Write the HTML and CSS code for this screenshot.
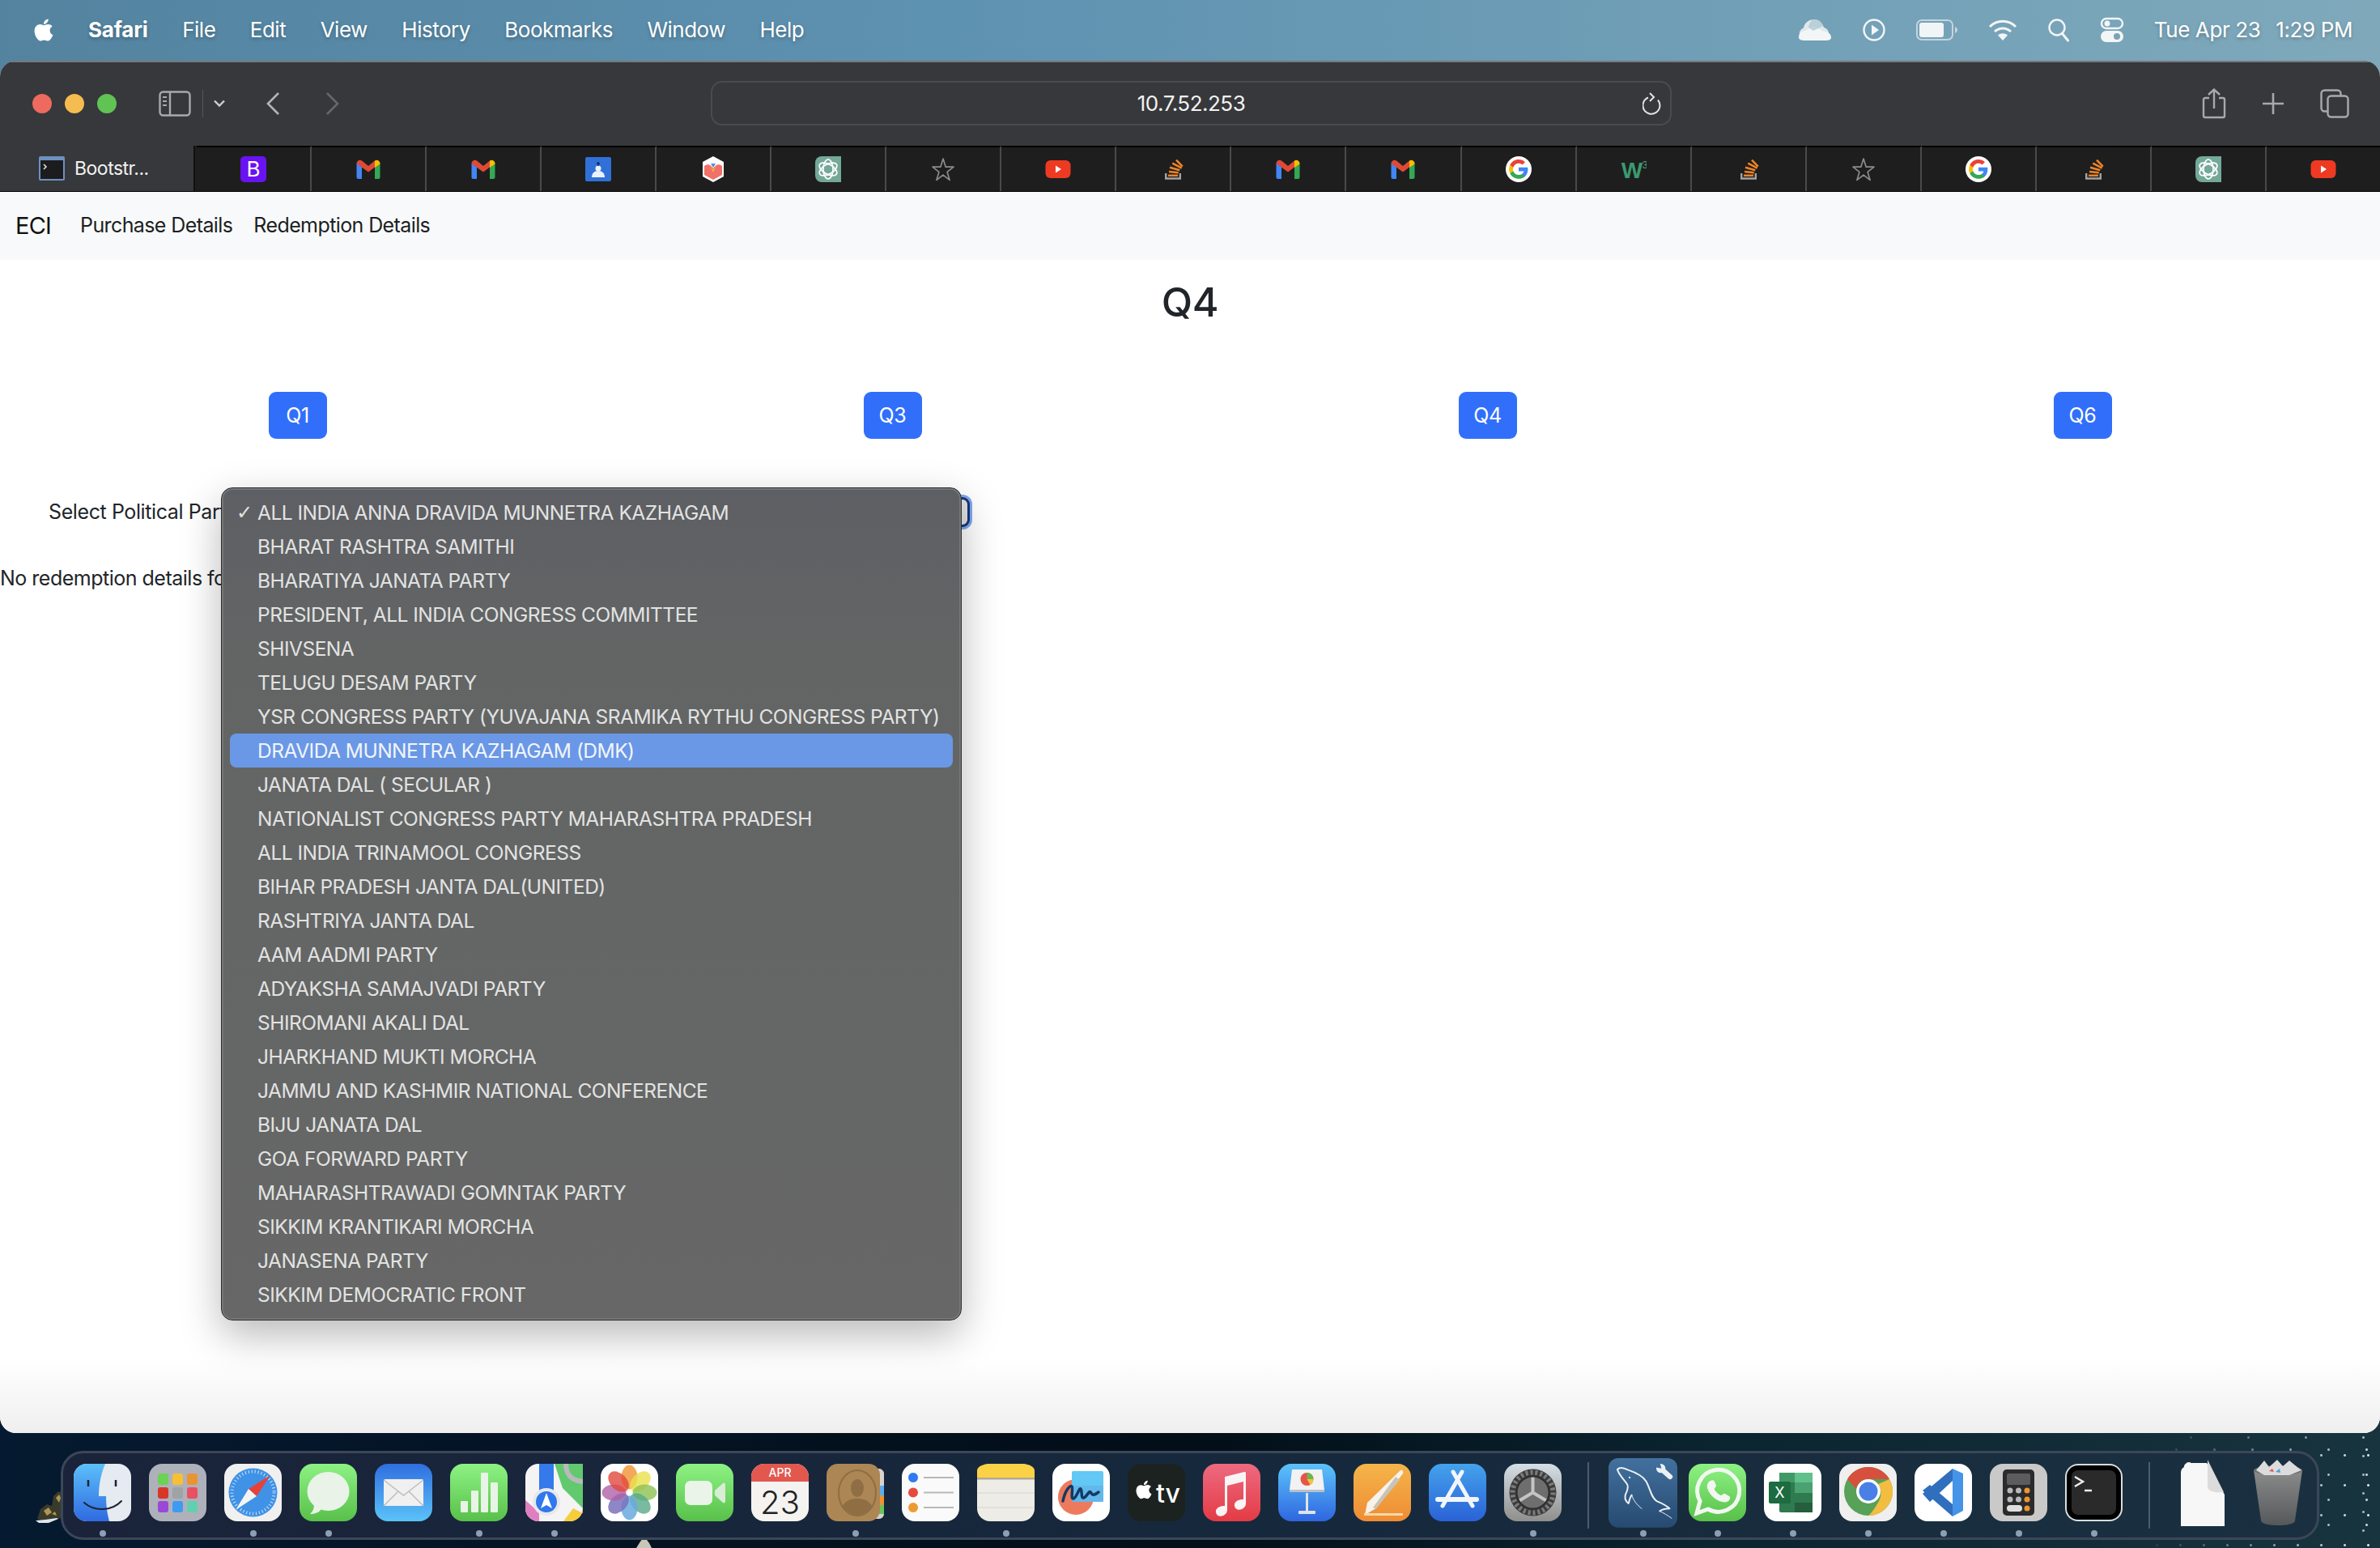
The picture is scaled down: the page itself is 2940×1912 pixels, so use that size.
FILE: index.html
```html
<!DOCTYPE html>
<html lang="en">
<head>
    <meta charset="UTF-8">
    <meta name="viewport" content="width=device-width, initial-scale=1.0">
    <title>Q4 - ECI</title>
    <link rel="stylesheet" href="styles.css">
</head>
<body>

<!-- Shared icons and gradients -->
<svg class="sprite" aria-hidden="true">
    <defs>
        <linearGradient id="gFinder" x1="0" y1="0" x2="0" y2="1"><stop offset="0" stop-color="#5cc0fa"/><stop offset="1" stop-color="#2f6ae0"/></linearGradient>
        <linearGradient id="gGreen" x1="0" y1="0" x2="0" y2="1"><stop offset="0" stop-color="#8df283"/><stop offset="1" stop-color="#58c04a"/></linearGradient>
        <linearGradient id="gMail" x1="0" y1="0" x2="0" y2="1"><stop offset="0" stop-color="#2f6fe0"/><stop offset="1" stop-color="#5cc2f8"/></linearGradient>
        <linearGradient id="gMusic" x1="0" y1="0" x2="0" y2="1"><stop offset="0" stop-color="#ee6a80"/><stop offset="1" stop-color="#e33b45"/></linearGradient>
        <linearGradient id="gKey" x1="0" y1="0" x2="0" y2="1"><stop offset="0" stop-color="#5cc3fa"/><stop offset="1" stop-color="#2e66e0"/></linearGradient>
        <linearGradient id="gPages" x1="0" y1="0" x2="0" y2="1"><stop offset="0" stop-color="#f5b54a"/><stop offset="1" stop-color="#ee8c34"/></linearGradient>
        <linearGradient id="gStore" x1="0" y1="0" x2="0" y2="1"><stop offset="0" stop-color="#44a2ec"/><stop offset="1" stop-color="#2a62d6"/></linearGradient>
        <linearGradient id="gGear" x1="0" y1="0" x2="0" y2="1"><stop offset="0" stop-color="#d5dfe6"/><stop offset="1" stop-color="#8f8f8c"/></linearGradient>
        <linearGradient id="gMysql" x1="0" y1="0" x2="0" y2="1"><stop offset="0" stop-color="#42719f"/><stop offset="1" stop-color="#274a70"/></linearGradient>
        <linearGradient id="gTrash" x1="0" y1="0" x2="0" y2="1"><stop offset="0" stop-color="#8b8b8b"/><stop offset="1" stop-color="#55585a"/></linearGradient>

        <symbol id="apple" viewBox="0 0 24 24"><path d="M17.05 20.28c-.98.95-2.05.8-3.08.35-1.09-.46-2.09-.48-3.24 0-1.44.62-2.2.44-3.06-.35C2.79 15.25 3.51 7.59 9.05 7.31c1.35.07 2.29.74 3.08.8 1.18-.24 2.31-.93 3.57-.84 1.51.12 2.65.72 3.4 1.8-3.12 1.87-2.38 5.98.48 7.13-.57 1.5-1.31 2.99-2.54 4.09zM12.03 7.25c-.15-2.23 1.66-4.07 3.74-4.25.29 2.58-2.34 4.5-3.74 4.25z"/></symbol>

        <symbol id="fav-gmail" viewBox="0 0 32 32">
            <path fill="#4285f4" d="M1.5 8.5V26a2 2 0 0 0 2 2h4.5V13z"/>
            <path fill="#34a853" d="M24 13v15h4.5a2 2 0 0 0 2-2V8.500z"/>
            <path fill="#e04a35" d="M1.500 9c0-3.500 4-5.500 6.500-3.500L16 12l8-6.500v8L16 19.500 1.500 9z"/>
            <path fill="#fbbc04" d="M24 5.500c2.500-2 6.500 0 6.500 3.500v.5L24 14z"/>
        </symbol>
        <symbol id="fav-google" viewBox="0 0 32 32">
            <circle cx="16" cy="16" r="16" fill="#fff"/>
            <g transform="translate(3 3) scale(1.08)">
                <path fill="#4285f4" d="M22.56 12.25c0-.78-.07-1.53-.2-2.25H12v4.26h5.92c-.26 1.37-1.04 2.53-2.21 3.31v2.77h3.57c2.08-1.92 3.28-4.74 3.28-8.09z"/>
                <path fill="#34a853" d="M12 23c2.97 0 5.46-.98 7.28-2.66l-3.57-2.77c-.98.66-2.23 1.06-3.71 1.06-2.86 0-5.29-1.93-6.16-4.53H2.18v2.84C3.99 20.53 7.7 23 12 23z"/>
                <path fill="#fbbc05" d="M5.84 14.09c-.22-.66-.35-1.36-.35-2.09s.13-1.43.35-2.09V7.07H2.18C1.43 8.55 1 10.22 1 12s.43 3.45 1.18 4.93l2.85-2.22.81-.62z"/>
                <path fill="#ea4335" d="M12 5.38c1.62 0 3.06.56 4.21 1.64l3.15-3.15C17.45 2.09 14.97 1 12 1 7.7 1 3.99 3.47 2.18 7.07l3.66 2.84c.87-2.6 3.3-4.53 6.16-4.53z"/>
            </g>
        </symbol>
        <symbol id="fav-yt" viewBox="0 0 32 32">
            <rect x="0.500" y="5" width="31" height="22" rx="6" fill="#ee3a22"/>
            <path fill="#fff" d="M13 11.500l7 4.500-7 4.500z"/>
        </symbol>
        <symbol id="fav-so" viewBox="0 0 32 32">
            <path fill="none" stroke="#a3a3a3" stroke-width="2.400" d="M7.200 21v6.500h17.600V21"/>
            <g fill="none" stroke="#ee8428" stroke-width="2.600">
                <path d="M10 23.700h12"/>
                <path d="M11 19l11.700 1.300"/>
                <path d="M12 13.700l12.300 3.600"/>
                <path d="M15.300 8.700l11.400 6"/>
                <path d="M20 4.700l7.700 8"/>
            </g>
        </symbol>
        <symbol id="fav-star" viewBox="0 0 32 32">
            <path fill="none" stroke="#8c8c8c" stroke-width="1.700" stroke-linejoin="round" d="M16 3l3.200 10.200h9.800l-7.900 6.200 3 10-8.100-6.300-8.100 6.300 3-10L3 13.200h9.800z"/>
        </symbol>
        <symbol id="fav-gpt" viewBox="0 0 32 32">
            <path fill="#74a899" d="M8 0h24v32H8a8 8 0 0 1-8-8V8a8 8 0 0 1 8-8z"/>
            <g fill="none" stroke="#fff" stroke-width="1.700">
                <ellipse cx="16" cy="16" rx="6" ry="12"/>
                <ellipse cx="16" cy="16" rx="6" ry="12" transform="rotate(60 16 16)"/>
                <ellipse cx="16" cy="16" rx="6" ry="12" transform="rotate(120 16 16)"/>
            </g>
        </symbol>
    </defs>
</svg>

<!-- macOS menu bar -->
<header class="menubar">
    <nav class="menu-left">
        <svg class="menu-apple"><use href="#apple"/></svg>
        <span class="menu-item menu-app">Safari</span>
        <span class="menu-item">File</span>
        <span class="menu-item">Edit</span>
        <span class="menu-item">View</span>
        <span class="menu-item">History</span>
        <span class="menu-item">Bookmarks</span>
        <span class="menu-item">Window</span>
        <span class="menu-item">Help</span>
    </nav>
    <div class="menu-right">
        <svg class="status-icon" width="42" height="28" viewBox="0 0 42 28"><path fill="#dfe8ec" d="M9 27a8 8 0 0 1-2-15.500C8 5 14 1 20 1c6 0 10 4 12 10a8.500 8.500 0 0 1 1 16z"/><path fill="#f3f6f7" d="M1 23c0-5 4-8 8-8l10-6 13 7c5 0 9 3 9 7 0 3-2 4-8 4H9c-5 0-8-1-8-4z"/><path fill="#a9c4d0" d="M20 1c5 0 9 3 11 8l-12 6-6-4c1-6 4-10 7-10z" opacity=".7"/></svg>
        <svg class="status-icon" width="30" height="30" viewBox="0 0 30 30"><circle cx="15" cy="15" r="12.500" fill="none" stroke="#f3f6f7" stroke-width="2.400"/><path fill="#f3f6f7" d="M12 8.500l9 6.500-9 6.500z"/></svg>
        <svg class="status-icon" width="52" height="26" viewBox="0 0 52 26"><rect x="1" y="1" width="44" height="24" rx="6" fill="none" stroke="#c3d5dd" stroke-width="2"/><rect x="4" y="4" width="30" height="18" rx="3" fill="#f1f5f6"/><path fill="#c3d5dd" d="M48 9c2 1 3 2.500 3 4s-1 3-3 4z"/></svg>
        <svg class="status-icon" width="36" height="28" viewBox="0 0 36 28"><g fill="none" stroke="#f3f6f7" stroke-width="3"><path d="M2 10c9-9 23-9 32 0"/><path d="M8 16c6-5.500 14-5.500 20 0"/></g><path fill="#f3f6f7" d="M18 27l-6-6.500c3.500-3 8.500-3 12 0z"/></svg>
        <svg class="status-icon" width="28" height="30" viewBox="0 0 28 30"><circle cx="12" cy="12" r="9.500" fill="none" stroke="#f3f6f7" stroke-width="2.400"/><path stroke="#f3f6f7" stroke-width="3" stroke-linecap="round" d="M18.500 19.500l7 8.500"/></svg>
        <svg class="status-icon" width="30" height="32" viewBox="0 0 30 32"><rect x="2" y="2" width="26" height="12" rx="6" fill="none" stroke="#f3f6f7" stroke-width="2.400"/><circle cx="9" cy="8" r="3.500" fill="#f3f6f7"/><rect x="1" y="17" width="28" height="14" rx="7" fill="#f3f6f7"/><circle cx="21" cy="24" r="4" fill="#7ba3b6"/></svg>
        <span class="clock"><span>Tue Apr 23</span><span>1:29 PM</span></span>
    </div>
</header>

<!-- Safari window -->
<main class="window">
    <div class="toolbar">
        <div class="traffic">
            <span class="light light-red"></span>
            <span class="light light-yellow"></span>
            <span class="light light-green"></span>
        </div>
        <svg class="tool tool-sidebar" width="40" height="32" viewBox="0 0 40 32"><rect x="1.500" y="1.500" width="37" height="29" rx="4" fill="none" stroke="#a8a9ab" stroke-width="2.400"/><path stroke="#a8a9ab" stroke-width="2.400" d="M14 2v28"/><path stroke="#a8a9ab" stroke-width="2" d="M5 8h5M5 13h5M5 18h5"/></svg>
        <span class="tool-divider"></span>
        <svg class="tool tool-down" width="16" height="10" viewBox="0 0 16 10"><path fill="none" stroke="#cfcfd0" stroke-width="2.400" d="M2 1.500l6 6 6-6"/></svg>
        <svg class="tool tool-back" width="18" height="30" viewBox="0 0 18 30"><path fill="none" stroke="#b3b4b6" stroke-width="2.600" d="M16 2L3 15l13 13"/></svg>
        <svg class="tool tool-forward" width="18" height="30" viewBox="0 0 18 30"><path fill="none" stroke="#66676a" stroke-width="2.600" d="M2 2l13 13L2 28"/></svg>
        <div class="address">
            <span class="address-text">10.7.52.253</span>
            <svg class="address-reload" width="24" height="28" viewBox="0 0 24 28"><path fill="none" stroke="#e4e4e5" stroke-width="2" d="M7 6.500a10.500 10.500 0 1 0 12 3"/><path fill="none" stroke="#e4e4e5" stroke-width="2" d="M9 1l5 5-5 5"/></svg>
        </div>
        <div class="tool-right">
            <svg width="30" height="38" viewBox="0 0 30 38"><path fill="none" stroke="#a8a9ab" stroke-width="2.400" d="M9 12H4a2 2 0 0 0-2 2v20a2 2 0 0 0 2 2h22a2 2 0 0 0 2-2V14a2 2 0 0 0-2-2h-5M15 25V2M8 8l7-6.500L22 8"/></svg>
            <svg width="28" height="28" viewBox="0 0 28 28"><path stroke="#a8a9ab" stroke-width="2.600" d="M14 1v26M1 14h26"/></svg>
            <svg width="36" height="36" viewBox="0 0 36 36"><rect x="1.500" y="1.500" width="24" height="26" rx="4" fill="none" stroke="#a8a9ab" stroke-width="2.400"/><rect x="9.500" y="8.500" width="25" height="26" rx="4" fill="#37383b" stroke="#a8a9ab" stroke-width="2.400"/></svg>
        </div>
    </div>

    <div class="tabbar">
        <div class="tab tab-active">
            <svg width="32" height="30" viewBox="0 0 32 30"><rect width="32" height="30" rx="2" fill="#6e90c0"/><rect x="2" y="5" width="28" height="23" fill="#1c1c1e"/><path fill="none" stroke="#ddd" stroke-width="1.600" d="M6 10l3 3-3 3"/></svg>
            <span class="tab-title">Bootstr...</span>
        </div>
        <div class="tab"><svg class="fav" viewBox="0 0 32 32"><rect width="32" height="32" rx="5" fill="#6a13f2"/><text x="16" y="25" class="fav-b">B</text></svg></div>
        <div class="tab"><svg class="fav"><use href="#fav-gmail"/></svg></div>
        <div class="tab"><svg class="fav"><use href="#fav-gmail"/></svg></div>
        <div class="tab"><svg class="fav" viewBox="0 0 32 32"><rect y="1" width="32" height="30" rx="2" fill="#3070d8"/><circle cx="16" cy="15" r="3.500" fill="#eaf1fb"/><path fill="#eaf1fb" d="M8 26c0-5 3-8 8-8s8 3 8 8z"/><path stroke="#0d2a5c" stroke-width="1.500" d="M16 7v5M14 9h4"/></svg></div>
        <div class="tab"><svg class="fav" viewBox="0 0 32 32"><path fill="#fff" d="M16 0l13 7v18l-13 7-13-7V7z"/><path fill="#f0706a" d="M5 12c4-3 8-2 11 3 3-5 7-6 11-3v11l-11 6-11-6z"/><path fill="#f6bd2b" d="M12 11l4 6 4-6-4 9z"/><path fill="#4b8de8" d="M13 9h6l-3 5z"/></svg></div>
        <div class="tab"><svg class="fav"><use href="#fav-gpt"/></svg></div>
        <div class="tab"><svg class="fav"><use href="#fav-star"/></svg></div>
        <div class="tab"><svg class="fav"><use href="#fav-yt"/></svg></div>
        <div class="tab"><svg class="fav"><use href="#fav-so"/></svg></div>
        <div class="tab"><svg class="fav"><use href="#fav-gmail"/></svg></div>
        <div class="tab"><svg class="fav"><use href="#fav-gmail"/></svg></div>
        <div class="tab"><svg class="fav"><use href="#fav-google"/></svg></div>
        <div class="tab"><svg class="fav" viewBox="0 0 32 32"><text x="14" y="27" class="fav-w">W</text><text x="30" y="15" class="fav-w3">3</text></svg></div>
        <div class="tab"><svg class="fav"><use href="#fav-so"/></svg></div>
        <div class="tab"><svg class="fav"><use href="#fav-star"/></svg></div>
        <div class="tab"><svg class="fav"><use href="#fav-google"/></svg></div>
        <div class="tab"><svg class="fav"><use href="#fav-so"/></svg></div>
        <div class="tab"><svg class="fav"><use href="#fav-gpt"/></svg></div>
        <div class="tab"><svg class="fav"><use href="#fav-yt"/></svg></div>
    </div>

    <div class="page">
        <nav class="navbar">
            <a class="brand">ECI</a>
            <a class="nav-link">Purchase Details</a>
            <a class="nav-link">Redemption Details</a>
        </nav>

        <h2 class="title">Q4</h2>

        <div class="q-grid">
            <div class="q-cell"><button class="q-btn">Q1</button></div>
            <div class="q-cell"><button class="q-btn">Q3</button></div>
            <div class="q-cell"><button class="q-btn">Q4</button></div>
            <div class="q-cell"><button class="q-btn">Q6</button></div>
        </div>

        <div class="select-row">
            <label class="select-label">Select Political Party:</label>
            <div class="select-box"></div>
        </div>

        <p class="no-data">No redemption details found</p>

        <!-- Open select popup -->
        <ul class="popup">
            <li class="opt opt-checked">ALL INDIA ANNA DRAVIDA MUNNETRA KAZHAGAM</li>
            <li class="opt">BHARAT RASHTRA SAMITHI</li>
            <li class="opt">BHARATIYA JANATA PARTY</li>
            <li class="opt">PRESIDENT, ALL INDIA CONGRESS COMMITTEE</li>
            <li class="opt">SHIVSENA</li>
            <li class="opt">TELUGU DESAM PARTY</li>
            <li class="opt">YSR CONGRESS PARTY (YUVAJANA SRAMIKA RYTHU CONGRESS PARTY)</li>
            <li class="opt opt-active">DRAVIDA MUNNETRA KAZHAGAM (DMK)</li>
            <li class="opt">JANATA DAL ( SECULAR )</li>
            <li class="opt">NATIONALIST CONGRESS PARTY MAHARASHTRA PRADESH</li>
            <li class="opt">ALL INDIA TRINAMOOL CONGRESS</li>
            <li class="opt">BIHAR PRADESH JANTA DAL(UNITED)</li>
            <li class="opt">RASHTRIYA JANTA DAL</li>
            <li class="opt">AAM AADMI PARTY</li>
            <li class="opt">ADYAKSHA SAMAJVADI PARTY</li>
            <li class="opt">SHIROMANI AKALI DAL</li>
            <li class="opt">JHARKHAND MUKTI MORCHA</li>
            <li class="opt">JAMMU AND KASHMIR NATIONAL CONFERENCE</li>
            <li class="opt">BIJU JANATA DAL</li>
            <li class="opt">GOA FORWARD PARTY</li>
            <li class="opt">MAHARASHTRAWADI GOMNTAK PARTY</li>
            <li class="opt">SIKKIM KRANTIKARI MORCHA</li>
            <li class="opt">JANASENA PARTY</li>
            <li class="opt">SIKKIM DEMOCRATIC FRONT</li>
        </ul>
    </div>
</main>

<!-- Dock -->
<footer class="dock-area">
    <!-- rocks in the wallpaper -->
    <svg class="rock rock-left" width="34" height="42" viewBox="0 0 34 42"><path fill="#3a3a2c" d="M2 36L6 24l8-6 6 2 2-12 6-6 6 2v30L18 40z"/><path fill="#b09650" d="M10 26l6-4 4 6-6 4zM25 10l4-4 2 4-2 6zM20 30l4-3 2 5z"/><path fill="#dfe6ea" d="M0 38l12-1 14-2 2 1-12 5H4z"/></svg>
    <svg class="rock rock-bottom" width="22" height="14" viewBox="0 0 22 14"><path fill="#c9c6b8" d="M2 14L7 6l5-6 6 8 3 6z"/></svg>

    <div class="dock">
        <div class="dock-item running"><svg class="dock-icon" viewBox="0 0 71 71"><rect width="71" height="71" rx="16" fill="#e6ebf1"/><path fill="url(#gFinder)" d="M16 0h23c-6 14-8 28-8 40h9c0 10 1 21 4 31H16A16 16 0 0 1 0 55V16A16 16 0 0 1 16 0z"/><path stroke="#1d2330" stroke-width="2.500" d="M18 20v8M52 20v8"/><path fill="none" stroke="#1d2330" stroke-width="2" stroke-linecap="round" d="M13 48c12 11 34 11 46-2"/></svg></div>
        <div class="dock-item"><svg class="dock-icon" viewBox="0 0 71 71"><rect width="71" height="71" rx="16" fill="#aeb1ba"/><g><rect x="11" y="12" width="13" height="14" rx="3" fill="#6bd353"/><rect x="29" y="12" width="13" height="14" rx="3" fill="#f7c033"/><rect x="47" y="12" width="13" height="14" rx="3" fill="#ea9430"/><rect x="11" y="29" width="13" height="14" rx="3" fill="#d9362a"/><rect x="29" y="29" width="13" height="14" rx="3" fill="#9ea3a6"/><rect x="47" y="29" width="13" height="14" rx="3" fill="#ea4f62"/><rect x="11" y="46" width="13" height="14" rx="3" fill="#9a48d6"/><rect x="29" y="46" width="13" height="14" rx="3" fill="#3f9af2"/><rect x="47" y="46" width="13" height="14" rx="3" fill="#62d0b0"/></g></svg></div>
        <div class="dock-item running"><svg class="dock-icon" viewBox="0 0 71 71"><rect width="71" height="71" rx="16" fill="#f0f0f0"/><circle cx="35.500" cy="35.500" r="30" fill="#3f92e6"/><circle cx="35.500" cy="35.500" r="26" fill="none" stroke="#cfe4f8" stroke-width="4" stroke-dasharray="1 3"/><path fill="#e7413a" d="M57 14L30 31l10 9z"/><path fill="#f4f4f4" d="M14 57l16-26 10 9z"/></svg></div>
        <div class="dock-item running"><svg class="dock-icon" viewBox="0 0 71 71"><rect width="71" height="71" rx="16" fill="url(#gGreen)"/><ellipse cx="35.500" cy="34" rx="26" ry="24" fill="#e9f3e8"/><path fill="#e9f3e8" d="M18 50c0 6-2 9-5 12 6 0 11-2 14-6z"/></svg></div>
        <div class="dock-item"><svg class="dock-icon" viewBox="0 0 71 71"><rect width="71" height="71" rx="16" fill="url(#gMail)"/><rect x="11" y="19" width="49" height="33" rx="2" fill="#f0f0f0"/><path fill="none" stroke="#bdbdbd" stroke-width="1.500" d="M11 20l24.500 19L60 20M11 52l18-18M60 52L42 34"/></svg></div>
        <div class="dock-item running"><svg class="dock-icon" viewBox="0 0 71 71"><rect width="71" height="71" rx="16" fill="url(#gGreen)"/><g fill="#e8f4e6"><rect x="13" y="46" width="9" height="14" rx="1"/><rect x="26" y="33" width="9" height="27" rx="1"/><rect x="38" y="11" width="9" height="49" rx="1"/><rect x="50" y="23" width="9" height="37" rx="1"/></g></svg></div>
        <div class="dock-item running"><svg class="dock-icon" viewBox="0 0 71 71"><rect width="71" height="71" rx="16" fill="#f4f4f4"/><path fill="#62c96f" d="M36 0h35v55L46 30z"/><path fill="none" stroke="#b9b9bd" stroke-width="6" d="M50 0c0 14 8 21 21 22"/><path fill="#e07fc0" d="M0 45l17 15v11H16A16 16 0 0 1 0 55z"/><path fill="#f6cd3d" d="M47 71l12-16 12 6v-6 0A16 16 0 0 1 55 71z"/><rect x="17" y="0" width="18" height="36" fill="#3579ea"/><circle cx="26" cy="47" r="17" fill="#e8e8ea"/><circle cx="26" cy="47" r="13" fill="#2f78ee"/><path fill="#fff" d="M26 36l7 19-7-4-7 4z"/></svg></div>
        <div class="dock-item"><svg class="dock-icon dock-photos" viewBox="0 0 71 71"><rect width="71" height="71" rx="16" fill="#fff"/><g transform="translate(35.500 35.500)"><ellipse cy="-19" rx="10" ry="15" fill="#f19a3e" opacity=".85"/><ellipse cy="-19" rx="10" ry="15" fill="#e9e14d" opacity=".8" transform="rotate(45)"/><ellipse cy="-19" rx="10" ry="15" fill="#8cc254" opacity=".8" transform="rotate(90)"/><ellipse cy="-19" rx="10" ry="15" fill="#58a98a" opacity=".8" transform="rotate(135)"/><ellipse cy="-19" rx="10" ry="15" fill="#6aa9de" opacity=".85" transform="rotate(180)"/><ellipse cy="-19" rx="10" ry="15" fill="#7a72bc" opacity=".85" transform="rotate(225)"/><ellipse cy="-19" rx="10" ry="15" fill="#b060a8" opacity=".8" transform="rotate(270)"/><ellipse cy="-19" rx="10" ry="15" fill="#e0483c" opacity=".8" transform="rotate(315)"/></g></svg></div>
        <div class="dock-item"><svg class="dock-icon" viewBox="0 0 71 71"><rect width="71" height="71" rx="16" fill="url(#gGreen)"/><rect x="11" y="21" width="34" height="30" rx="7" fill="#eaf4e8"/><path fill="#d8ecd6" d="M48 33l10-9c2-1 3 0 3 2v20c0 2-1 3-3 2l-10-9z"/></svg></div>
        <div class="dock-item"><svg class="dock-icon" viewBox="0 0 71 71"><rect width="71" height="71" rx="16" fill="#f5f3f0"/><path fill="#e2584f" d="M16 0h39a16 16 0 0 1 16 16v6H0v-6A16 16 0 0 1 16 0z"/><text x="35.500" y="16" class="cal-month">APR</text><text x="35.500" y="62" class="cal-day">23</text></svg></div>
        <div class="dock-item running"><svg class="dock-icon" viewBox="0 0 71 71"><path fill="#d8d4cc" d="M60 6h5c3 0 6 3 6 6v50c0 3-3 6-6 6h-5z"/><path fill="#59aef0" d="M64 27h7v12h-7z"/><path fill="#ee9431" d="M64 39h7v12h-7z"/><path fill="#68c55d" d="M64 51h7v11h-7z"/><rect width="66" height="71" rx="14" fill="#ac8654"/><ellipse cx="38" cy="36" rx="23" ry="28" fill="none" stroke="#8f6e43" stroke-width="2"/><ellipse cx="38" cy="30" rx="8" ry="11" fill="#8f6e43"/><path fill="#8f6e43" d="M20 52c4-7 10-9 18-9s14 2 18 9c-4 7-11 11-18 11s-14-4-18-11z"/></svg></div>
        <div class="dock-item"><svg class="dock-icon" viewBox="0 0 71 71"><rect width="71" height="71" rx="16" fill="#fafafa"/><circle cx="14" cy="17" r="6" fill="#2f7af0" stroke="#2f7af0"/><circle cx="14" cy="17" r="6.500" fill="none" stroke="#fff" stroke-width="1"/><circle cx="14" cy="35.500" r="6" fill="#e84a3f"/><circle cx="14" cy="54" r="6" fill="#ee9a32"/><path stroke="#b8b8b8" stroke-width="2" d="M27 17h37M27 35.500h37M27 54h37"/></svg></div>
        <div class="dock-item running"><svg class="dock-icon" viewBox="0 0 71 71"><rect width="71" height="71" rx="16" fill="#eeece7"/><path fill="#fbd246" d="M16 0h39a16 16 0 0 1 16 16v18H0V16A16 16 0 0 1 16 0z" transform="scale(1 .52)"/><rect y="17" width="71" height="2.500" fill="#b2aa92"/><path stroke="#dedcd6" stroke-width="1.500" d="M0 36h71M0 54h71"/></svg></div>
        <div class="dock-item"><svg class="dock-icon" viewBox="0 0 71 71"><rect width="71" height="71" rx="16" fill="#fff"/><circle cx="29" cy="41" r="22" fill="#ee7a5e"/><rect x="24" y="9" width="39" height="38" rx="2" fill="#62c8f5"/><path fill="#63aee4" d="M24 27h39v20H24z" opacity=".6"/><path fill="none" stroke="#123a63" stroke-width="3.500" stroke-linecap="round" d="M13 46c3-14 9-20 11-18s-2 16 2 15 7-14 9-12 0 13 4 11 6-9 8-7 2 6 10 0"/></svg></div>
        <div class="dock-item"><svg class="dock-icon" viewBox="0 0 71 71"><rect width="71" height="71" rx="16" fill="#1c2220"/><use href="#apple" x="5" y="16" width="30" height="32" fill="#fff"/><text x="50" y="48" class="tv-text">tv</text></svg></div>
        <div class="dock-item"><svg class="dock-icon" viewBox="0 0 71 71"><rect width="71" height="71" rx="16" fill="url(#gMusic)"/><path fill="#fbf4f4" d="M27 16l24-6c1 0 2 0 2 2v37c0 8-13 11-14 3-1-6 6-8 11-8V22l-20 5v30c0 8-13 11-14 3-1-6 6-8 11-8z"/></svg></div>
        <div class="dock-item"><svg class="dock-icon" viewBox="0 0 71 71"><rect width="71" height="71" rx="16" fill="url(#gKey)"/><path fill="#f2f2f2" d="M17 7h37l3 25H14z"/><rect x="14" y="32" width="43" height="3" fill="#b8c0cc"/><circle cx="35.500" cy="19" r="8" fill="#e7554a"/><path fill="#6ab84f" d="M35.500 19V11a8 8 0 0 1 8 8z"/><path fill="#f3c43c" d="M35.500 19h8a8 8 0 0 1-4 7z"/><rect x="34" y="36" width="3" height="24" fill="#dfe3e8"/><rect x="25" y="58" width="21" height="4" rx="1" fill="#dfe3e8"/></svg></div>
        <div class="dock-item"><svg class="dock-icon" viewBox="0 0 71 71"><rect width="71" height="71" rx="16" fill="url(#gPages)"/><path fill="#f7f3ea" d="M58 8c2-1 4 1 3 4L28 55l-14 8 3-15z"/><path fill="#c8c4b8" d="M52 16l5 4-30 36-3-2z"/><rect x="13" y="61" width="48" height="3" fill="#f8d8a6"/></svg></div>
        <div class="dock-item"><svg class="dock-icon" viewBox="0 0 71 71"><rect width="71" height="71" rx="16" fill="url(#gStore)"/><g stroke="#f2f6fb" stroke-width="5" stroke-linecap="round"><path d="M30 10l24 42M41 10L17 52"/><path stroke-width="6" d="M11 44h48"/></g></svg></div>
        <div class="dock-item running"><svg class="dock-icon" viewBox="0 0 71 71"><rect width="71" height="71" rx="16" fill="url(#gGear)"/><circle cx="35.500" cy="35.500" r="29" fill="#3c3c3c"/><circle cx="35.500" cy="35.500" r="25" fill="none" stroke="#7c7c7c" stroke-width="6" stroke-dasharray="3 3"/><circle cx="35.500" cy="35.500" r="20" fill="#6e6e6e"/><g stroke="#c4c4c4" stroke-width="4"><path d="M35.500 35.500V15M35.500 35.500L53 46M35.500 35.500L18 46"/></g><circle cx="35.500" cy="35.500" r="20" fill="none" stroke="#2e2e2e" stroke-width="2"/></svg></div>

        <span class="dock-sep"></span>

        <div class="dock-item dock-mysql running"><svg class="dock-icon-tall" viewBox="32 18 255 257"><rect x="32" y="18" width="255" height="257" rx="36" fill="url(#gMysql)"/><g fill="none" stroke="#eaf0f5" stroke-width="6" stroke-linejoin="round" stroke-linecap="round"><path d="M65 60C72 52 85 52 105 62c30 10 55 23 67 43 16 30 18 60 40 73 18 8 33 14 46 27-13 0-26 3-36 9"/><path d="M65 60c3 15 15 28 33 50 10 12 6 25-2 40-6 15-1 28 10 36 4-14 6-24 12-31"/></g><g fill="none" stroke="#eaf0f5" stroke-linecap="round"><path stroke-width="3" d="M222 214c14 8 30 16 44 27"/><path stroke-width="3" d="M118 155c6 20 20 37 37 50"/></g><circle cx="110" cy="90" r="3.500" fill="#eaf0f5"/><circle cx="226" cy="56" r="17" fill="#eaf0f5"/><path stroke="#eaf0f5" stroke-width="19" stroke-linecap="round" d="M232 62l28 25"/><path fill="#3e6c99" d="M222 34l6 22-22-4z"/></svg></div>
        <div class="dock-item running dock-after-mysql"><svg class="dock-icon" viewBox="0 0 71 71"><rect width="71" height="71" rx="16" fill="url(#gGreen)"/><path fill="none" stroke="#f2f7f1" stroke-width="5" d="M10 61l4-15a26 26 0 1 1 10 10z"/><path fill="#f2f7f1" d="M27 21c2-1 4-1 5 1l2 5c0 2-3 3-2 5 2 3 5 6 8 7 2 0 3-3 5-2l5 3c2 1 1 4 0 5-2 3-7 3-12 1-7-3-13-9-15-16-1-4 1-8 4-9z"/></svg></div>
        <div class="dock-item running"><svg class="dock-icon" viewBox="0 0 71 71"><rect width="71" height="71" rx="16" fill="#fff"/><rect x="19" y="11" width="41" height="49" rx="2" fill="#2f7a4e"/><rect x="38" y="11" width="22" height="12" fill="#62c08b"/><rect x="38" y="23" width="22" height="13" fill="#49a270"/><rect x="19" y="11" width="19" height="12" fill="#3f9a66"/><rect x="38" y="36" width="22" height="12" fill="#2f7a4e"/><rect x="38" y="48" width="22" height="12" fill="#245e3d"/><rect x="6" y="22" width="27" height="27" rx="2" fill="#1d6b40"/><text x="19.500" y="42" class="xl-text">X</text></svg></div>
        <div class="dock-item running"><svg class="dock-icon" viewBox="0 0 71 71"><rect width="71" height="71" rx="16" fill="#efefef"/><circle cx="36" cy="34" r="30" fill="#57a158"/><path fill="#d7503e" d="M10 19A30 30 0 0 1 62 19H36c-8 0-13 4-15 12z"/><path fill="#f3bd42" d="M62 19a30 30 0 0 1-26 45c2 0 12-15 14-20 3-7 1-15-2-19z"/><circle cx="36" cy="34" r="15" fill="#fff"/><circle cx="36" cy="34" r="11.500" fill="#4a7fe8"/></svg></div>
        <div class="dock-item running"><svg class="dock-icon" viewBox="0 0 71 71"><rect width="71" height="71" rx="16" fill="#fff"/><path fill="#2f6fbe" d="M10 37L47 6v15L19 47zM10 33l9-7 28 24v15z"/><path fill="#4694e8" d="M47 6l13 6v46l-13 7z"/></svg></div>
        <div class="dock-item running"><svg class="dock-icon" viewBox="0 0 71 71"><rect width="71" height="71" rx="16" fill="#c9c9c9"/><rect x="16" y="7" width="39" height="57" rx="5" fill="#2b2b2d"/><rect x="21" y="12" width="29" height="14" rx="2" fill="#5c5c5e"/><g fill="#b9b9b9"><circle cx="25" cy="33" r="3.500"/><circle cx="35.500" cy="33" r="3.500"/><circle cx="25" cy="44" r="3.500"/><circle cx="35.500" cy="44" r="3.500"/></g><circle cx="46" cy="33" r="3.500" fill="#ee9430"/><circle cx="46" cy="44" r="3.500" fill="#ee9430"/><rect x="21" y="51" width="19" height="8" rx="4" fill="#dedede"/><circle cx="46" cy="55" r="3.500" fill="#ee9430"/></svg></div>
        <div class="dock-item running"><svg class="dock-icon" viewBox="0 0 71 71"><rect width="71" height="71" rx="16" fill="#d8dcde"/><rect x="2" y="2" width="67" height="67" rx="14" fill="#000"/><rect x="8" y="8" width="55" height="55" rx="8" fill="#2a2a2a"/><path fill="none" stroke="#eee" stroke-width="2.500" d="M12 16l10 6-10 6"/><path stroke="#eee" stroke-width="2.500" d="M24 33h9"/></svg></div>

        <span class="dock-sep dock-sep-end"></span>

        <div class="dock-item dock-doc"><svg class="dock-icon-tall" viewBox="0 0 54 82"><path fill="#d9d9d9" d="M4 8L8 3h4V8z"/><path fill="#f7f7f7" d="M0 16c0-4 2-6 4-7 0-3 2-5 5-5h23l22 39v39H0z"/><path fill="#dcdcdc" d="M33 0l20 40c-8 1-19 0-20-6z"/></svg></div>
        <div class="dock-item dock-trash"><svg class="dock-icon-tall" viewBox="0 0 62 82"><path fill="url(#gTrash)" d="M1 14h60L52 76c0 4-10 6-21 6s-21-2-21-6z"/><ellipse cx="31" cy="14" rx="30" ry="6" fill="#6e6e6e"/><path fill="#dcdcdc" d="M4 14L14 2l6 8 10-9 7 8 8-7 6 5 9 7-15 6H14z"/><path fill="#e25555" d="M20 15l4-3 2 4z"/><path fill="#4aa0e0" d="M28 16l5-4 1 5z"/></svg></div>
    </div>
</footer>

</body>
</html>
```
FILE: styles.css
```css
* {
    box-sizing: border-box;
}

body {
    margin: 0;
    width: 2940px;
    height: 1912px;
    overflow: hidden;
    display: flex;
    flex-direction: column;
    font-family: Inter, "Liberation Sans", sans-serif;
    background:
        linear-gradient(90deg, #53839f 0%, #5e92b1 40%, #6f9eb6 70%, #7fa9bb 100%) top / 100% 110px no-repeat,
        linear-gradient(90deg, #051a30 0%, #041426 20%, #020e18 50%, #0a2430 72%, #18343f 100%);
}

.sprite {
    position: absolute;
    width: 0;
    height: 0;
}

/* menu bar */
.menubar {
    flex: 0 0 75px;
    display: flex;
    justify-content: space-between;
    align-items: center;
    padding: 0 34px 2px 41px;
    color: #fff;
    font-size: 26px;
    letter-spacing: -0.5px;
    text-shadow: 0 2px 4px rgba(0, 0, 0, 0.25);
}

.menu-left {
    display: flex;
    align-items: center;
}

.menu-apple {
    width: 36px;
    height: 36px;
    fill: #fff;
    margin-left: -5px;
    margin-right: 37px;
}

.menu-item {
    margin-right: 42.500px;
}

.menu-app {
    font-weight: 700;
    letter-spacing: -0.2px;
}

.menu-right {
    display: flex;
    align-items: center;
    gap: 37px;
}

.clock {
    display: flex;
    gap: 19px;
    font-size: 26px;
    letter-spacing: -0.4px;
}

/* browser window */
.window {
    flex: 0 0 1695px;
    display: flex;
    flex-direction: column;
    overflow: hidden;
    border-radius: 20px;
    background: #fff;
}

.toolbar {
    flex: 0 0 105px;
    display: flex;
    align-items: center;
    padding: 0 38px 2px 40px;
    background: #37383b;
    border-top: 2px solid #77787b;
}

.traffic {
    display: flex;
    gap: 16px;
}

.light {
    width: 24px;
    height: 24px;
    border-radius: 50%;
}

.light-red {
    background: #ee6a5e;
}

.light-yellow {
    background: #f5bd4f;
}

.light-green {
    background: #61c354;
}

.tool-sidebar {
    margin-left: 52px;
}

.tool-divider {
    width: 1px;
    height: 34px;
    margin-left: 14px;
    background: #55565a;
}

.tool-down {
    margin-left: 12px;
}

.tool-back {
    margin-left: 49px;
}

.tool-forward {
    margin-left: 56px;
}

.address {
    width: 1187px;
    height: 55px;
    margin-left: 458px;
    display: flex;
    align-items: center;
    justify-content: center;
    position: relative;
    border: 2px solid #4a4b4e;
    border-radius: 14px;
}

.address-text {
    color: #f2f2f2;
    font-size: 26px;
    letter-spacing: -0.5px;
}

.address-reload {
    position: absolute;
    right: 10px;
    top: 12px;
}

.tool-right {
    margin-left: auto;
    display: flex;
    align-items: center;
    gap: 44px;
}

.tabbar {
    flex: 0 0 57px;
    display: flex;
    background: #1e1e1e;
    border-bottom: 1px solid #000;
}

.tab {
    flex: 1;
    display: flex;
    align-items: center;
    justify-content: center;
    border-top: 2px solid #000;
    border-right: 2px solid #4a4a4c;
}

.tab:last-child {
    border-right: none;
}

.tab-active {
    flex: 0 0 241px;
    margin-right: 2px;
    justify-content: flex-start;
    gap: 12px;
    padding-left: 48px;
    color: #f2f2f2;
    font-size: 23px;
    letter-spacing: -0.5px;
    background: #37383b;
    border-top: none;
    border-right: 2px solid #111;
}

.fav {
    width: 32px;
    height: 32px;
}

.fav-b {
    fill: #fff;
    font-family: Inter, sans-serif;
    font-size: 26px;
    text-anchor: middle;
}

.fav-w {
    fill: #3b9a6e;
    font-family: "Liberation Sans", sans-serif;
    font-weight: 700;
    font-size: 28px;
    text-anchor: middle;
}

.fav-w3 {
    fill: #5c9c80;
    font-family: "Liberation Sans", sans-serif;
    font-size: 12px;
    text-anchor: middle;
}

/* page content */
.page {
    flex: 1;
    position: relative;
    color: #212529;
    font-size: 25px;
    background: linear-gradient(180deg, #fff 0%, #fff 94%, #efefef 100%);
}

.navbar {
    height: 84px;
    display: flex;
    align-items: center;
    padding: 0 19px 2px;
    gap: 26px;
    background: #f8f9fa;
}

.brand {
    color: #111;
    font-size: 29px;
    letter-spacing: -0.8px;
    margin-right: 10px;
}

.nav-link {
    color: #1c1f22;
    font-size: 25px;
    letter-spacing: -0.6px;
}

.title {
    margin: 21px 0 0;
    height: 62px;
    line-height: 62px;
    text-align: center;
    font-size: 50px;
    font-weight: 500;
    letter-spacing: -0.4px;
}

.q-grid {
    display: grid;
    grid-template-columns: repeat(4, 1fr);
    margin-top: 80px;
}

.q-cell {
    text-align: center;
}

.q-btn {
    width: 72px;
    height: 58px;
    padding: 0;
    border: none;
    border-radius: 9px;
    color: #fff;
    font-family: inherit;
    font-size: 25px;
    letter-spacing: -0.4px;
    background: #316ffb;
}

.select-row {
    display: flex;
    align-items: center;
    margin-top: 66px;
    padding-left: 60px;
    height: 48px;
}

.select-label {
    flex: 0 0 288px;
    white-space: nowrap;
    letter-spacing: -0.4px;
}

.select-box {
    width: 850px;
    height: 37px;
    background: #e2e2e2;
    border: 3px solid #15367a;
    border-radius: 9px;
    box-shadow: 0 0 0 3px #7ea7ec;
}

.no-data {
    margin: 43px 0 0;
    height: 30px;
    line-height: 30px;
    letter-spacing: -0.5px;
}

/* open select list, lies over the page */
.popup {
    position: absolute;
    left: 273px;
    top: 365px;
    width: 915px;
    height: 1029px;
    margin: 0;
    padding: 9px 10px;
    list-style: none;
    color: #e2e3e2;
    font-size: 24.500px;
    letter-spacing: -0.5px;
    background: linear-gradient(180deg, #5d5f64 0%, #636565 20%, #666766 100%);
    border: 1px solid #2e2e30;
    border-radius: 14px;
    box-shadow: inset 0 0 0 2px #757678, 0 18px 50px rgba(0, 0, 0, 0.28);
}

.opt {
    height: 42px;
    line-height: 42px;
    padding-left: 34px;
    white-space: nowrap;
    border-radius: 8px;
    position: relative;
}

.opt-active {
    color: #f2f5fb;
    background: #6a98e6;
}

.opt-checked::before {
    content: "\2713";
    position: absolute;
    left: 8px;
    font-family: "DejaVu Sans", sans-serif;
    font-size: 24px;
    font-weight: 700;
}

/* dock */
.dock-area {
    flex: 1;
    position: relative;
    padding: 22px 75px 0;
}

.dock-area::before {
    content: "";
    position: absolute;
    top: 0;
    right: 0;
    bottom: 0;
    width: 380px;
    background-image:
        radial-gradient(circle, #cfd8dc 1px, transparent 2px),
        radial-gradient(circle, #aebcc3 1px, transparent 2px),
        radial-gradient(circle, #e2e8ea 1px, transparent 2px);
    background-size: 47px 31px, 71px 23px, 29px 37px;
    background-position: 11px 5px, 40px 17px, 3px 9px;
    -webkit-mask-image: linear-gradient(90deg, transparent 20%, #000 100%);
}

.rock {
    position: absolute;
}

.rock-left {
    left: 44px;
    top: 70px;
}

.rock-bottom {
    left: 784px;
    bottom: 0;
}

.dock {
    position: relative;
    height: 110px;
    display: flex;
    gap: 22px;
    padding: 13px 0 0 13px;
    border: 3px solid #3b4759;
    border-radius: 28px;
    background: linear-gradient(90deg, #1a2339 0%, #16283c 50%, #1a3040 100%);
}

.dock-item {
    position: relative;
    flex: 0 0 71px;
    height: 71px;
}

.dock-icon {
    display: block;
    width: 71px;
    height: 71px;
}

.dock-icon-tall {
    display: block;
    width: 100%;
}

.running::after {
    content: "";
    position: absolute;
    left: 50%;
    top: 82px;
    width: 8px;
    height: 8px;
    margin-left: -4px;
    border-radius: 50%;
    background: #8d9fb5;
}

.dock-sep {
    flex: 0 0 2px;
    height: 82px;
    margin: -2px 0 0 10px;
    background: #4c5c6e;
}

.dock-mysql {
    flex-basis: 85px;
    margin: -7px -8px 0 2px;
}

.dock-mysql.running::after {
    top: 89px;
}

.dock-doc {
    flex-basis: 54px;
    margin: -5px 0 0 16px;
}

.dock-trash {
    flex-basis: 62px;
    margin: -6px 0 0 13px;
}

.cal-month {
    fill: #fff;
    font-family: Inter, sans-serif;
    font-size: 14px;
    font-weight: 500;
    text-anchor: middle;
}

.cal-day {
    fill: #222;
    font-family: Inter, sans-serif;
    font-size: 40px;
    font-weight: 300;
    text-anchor: middle;
}

.tv-text {
    fill: #fff;
    font-family: Inter, sans-serif;
    font-size: 32px;
    font-weight: 500;
    text-anchor: middle;
}

.xl-text {
    fill: #fff;
    font-family: Inter, sans-serif;
    font-size: 18px;
    text-anchor: middle;
}
```
